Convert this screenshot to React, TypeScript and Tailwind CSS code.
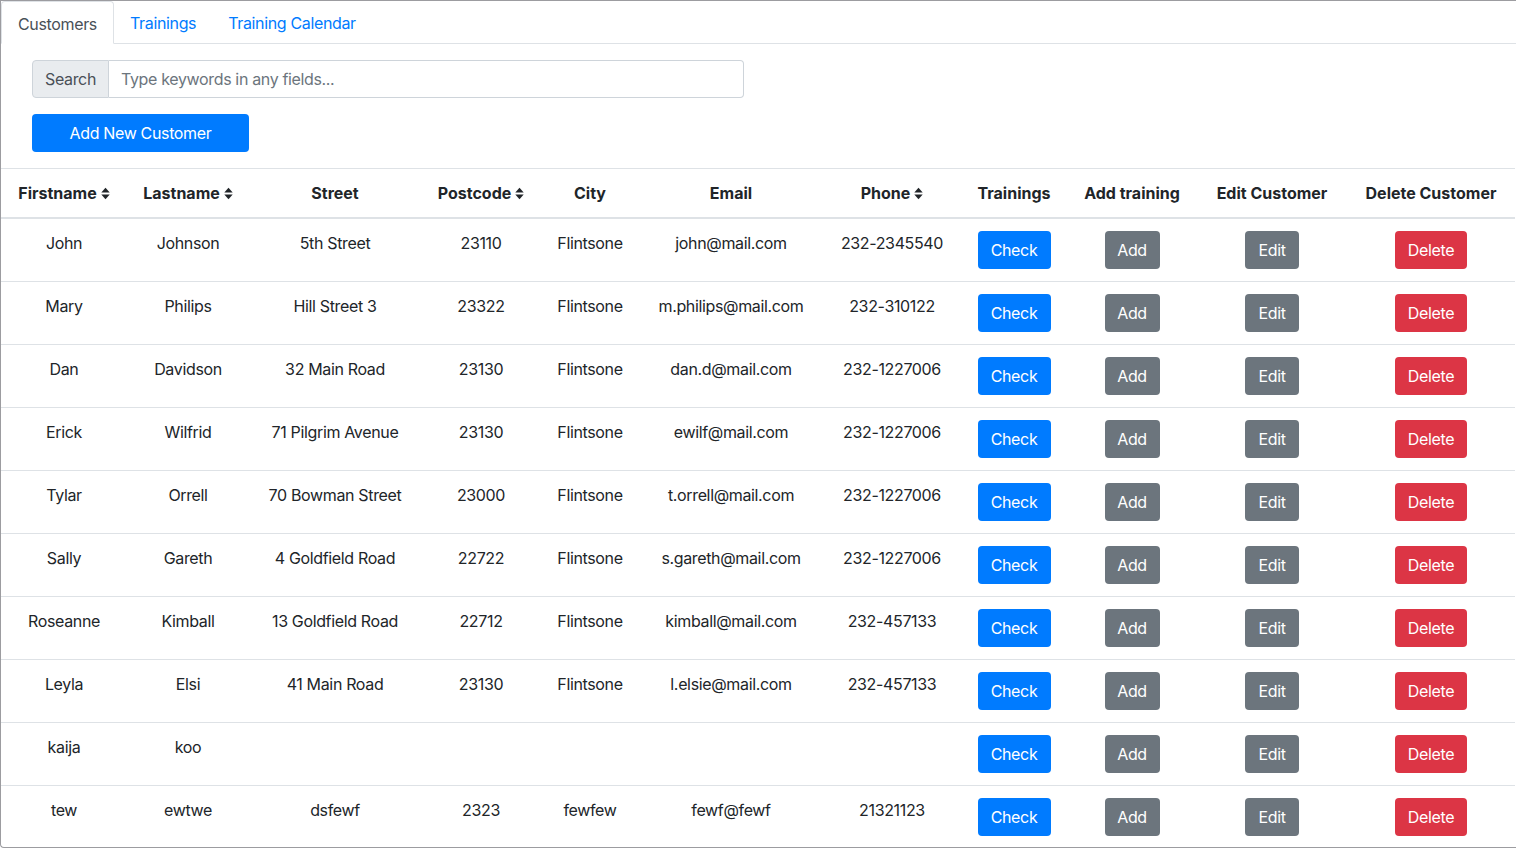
import React from "react";

const rows = [
  ["John", "Johnson", "5th Street", "23110", "Flintsone", "john@mail.com", "232-2345540"],
  ["Mary", "Philips", "Hill Street 3", "23322", "Flintsone", "m.philips@mail.com", "232-310122"],
  ["Dan", "Davidson", "32 Main Road", "23130", "Flintsone", "dan.d@mail.com", "232-1227006"],
  ["Erick", "Wilfrid", "71 Pilgrim Avenue", "23130", "Flintsone", "ewilf@mail.com", "232-1227006"],
  ["Tylar", "Orrell", "70 Bowman Street", "23000", "Flintsone", "t.orrell@mail.com", "232-1227006"],
  ["Sally", "Gareth", "4 Goldfield Road", "22722", "Flintsone", "s.gareth@mail.com", "232-1227006"],
  ["Roseanne", "Kimball", "13 Goldfield Road", "22712", "Flintsone", "kimball@mail.com", "232-457133"],
  ["Leyla", "Elsi", "41 Main Road", "23130", "Flintsone", "l.elsie@mail.com", "232-457133"],
  ["kaija", "koo", "", "", "", "", ""],
  ["tew", "ewtwe", "dsfewf", "2323", "fewfew", "fewf@fewf", "21321123"],
];

const widths = [126, 122, 172, 120, 98, 184, 138, 106, 130, 150, 168];

function SortIcon() {
  return (
    <svg width="9" height="13" viewBox="0 0 9 13" className="inline-block ml-[4px] -mt-[3px]">
      <path d="M0.3 5.4 L4.5 0.8 L8.7 5.4 Z" fill="#212529" />
      <path d="M0.3 7.6 L4.5 12.2 L8.7 7.6 Z" fill="#212529" />
    </svg>
  );
}

const headers: [string, boolean][] = [
  ["Firstname", true],
  ["Lastname", true],
  ["Street", false],
  ["Postcode", true],
  ["City", false],
  ["Email", false],
  ["Phone", true],
  ["Trainings", false],
  ["Add training", false],
  ["Edit Customer", false],
  ["Delete Customer", false],
];

export default function App() {
  return (
    <div
      className="h-[848px] w-[1516px] overflow-hidden bg-white border-l border-t border-b border-[#9c9ca0] rounded-bl-[4px] text-[#212529] text-[16px] leading-[24px] tracking-[-0.35px]"
      style={{ fontFamily: "Inter, 'Noto Sans', sans-serif" }}
    >
      {/* Tabs */}
      <div className="flex h-[43px] border-b border-[#dee2e6]">
        <div className="px-[16px] pt-[10px] h-[43px] border border-[#dee2e6] border-b-white -mb-px bg-white rounded-t-[4px] text-[#495057] w-[113px] text-center">
          Customers
        </div>
        <div className="px-[16px] pt-[10px] text-[#007bff]">Trainings</div>
        <div className="px-[16px] pt-[10px] text-[#007bff]">Training Calendar</div>
      </div>

      {/* Search */}
      <div className="pl-[31px] pt-[16px]">
        <div className="flex w-[712px] h-[38px]">
          <div className="px-[12px] flex items-center bg-[#e9ecef] border border-[#ced4da] rounded-l-[4px] text-[#495057] w-[77px]">
            Search
          </div>
          <div className="flex-1 flex items-center px-[12px] border border-l-0 border-[#ced4da] rounded-r-[4px] text-[#6c757d]">
            Type keywords in any fields...
          </div>
        </div>
        <div className="mt-[16px] w-[217px] h-[38px] flex items-center justify-center bg-[#007bff] text-white rounded-[4px]">
          Add New Customer
        </div>
      </div>

      {/* Table */}
      <table className="mt-[16px] border-collapse table-fixed w-[1514px]">
        <colgroup>
          {widths.map((w, i) => (
            <col key={i} style={{ width: w }} />
          ))}
        </colgroup>
        <thead>
          <tr className="border-t border-[#dee2e6] border-b-2">
            {headers.map(([h, s]) => (
              <th key={h} className="p-[12px] text-center font-bold whitespace-nowrap tracking-normal">
                {h}
                {s && <SortIcon />}
              </th>
            ))}
          </tr>
        </thead>
        <tbody>
          {rows.map((r, i) => (
            <tr key={i} className="border-b border-[#dee2e6] h-[63px]">
              {r.map((c, j) => (
                <td key={j} className="px-[12px] py-[12px] align-top text-center whitespace-nowrap">
                  {c}
                </td>
              ))}
              <td className="py-[12px] text-center align-top">
                <span className="inline-flex h-[38px] w-[73px] items-center justify-center rounded-[4px] bg-[#007bff] text-white">
                  Check
                </span>
              </td>
              <td className="py-[12px] text-center align-top">
                <span className="inline-flex h-[38px] w-[55px] items-center justify-center rounded-[4px] bg-[#6c757d] text-white">
                  Add
                </span>
              </td>
              <td className="py-[12px] text-center align-top">
                <span className="inline-flex h-[38px] w-[54px] items-center justify-center rounded-[4px] bg-[#6c757d] text-white">
                  Edit
                </span>
              </td>
              <td className="py-[12px] text-center align-top">
                <span className="inline-flex h-[38px] w-[72px] items-center justify-center rounded-[4px] bg-[#dc3545] text-white">
                  Delete
                </span>
              </td>
            </tr>
          ))}
        </tbody>
      </table>
    </div>
  );
}
